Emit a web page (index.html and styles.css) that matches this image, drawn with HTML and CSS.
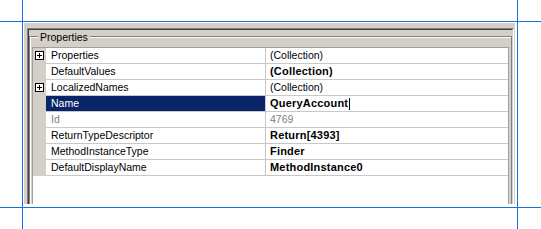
FILE: index.html
```html
<!DOCTYPE html>
<html>
<head>
    <link rel="stylesheet" href="styles.css">
</head>
<body>

<div class="panel">
    <div class="frame">
        <div class="frame-inner">
            <div class="group">
                <span class="group-title">Properties</span>
                <div class="grid">
                    <div class="row">
                        <div class="gutter">
                            <svg class="expand" width="9" height="9" viewBox="0 0 9 9"><rect x="0.5" y="0.5" width="8" height="8" fill="#fff" stroke="#000"/><path d="M2 4.5h5M4.5 2v5" stroke="#000"/></svg>
                        </div>
                        <div class="name">Properties</div>
                        <div class="value">(Collection)</div>
                    </div>
                    <div class="row">
                        <div class="gutter"></div>
                        <div class="name">DefaultValues</div>
                        <div class="value strong">(Collection)</div>
                    </div>
                    <div class="row">
                        <div class="gutter">
                            <svg class="expand" width="9" height="9" viewBox="0 0 9 9"><rect x="0.5" y="0.5" width="8" height="8" fill="#fff" stroke="#000"/><path d="M2 4.5h5M4.5 2v5" stroke="#000"/></svg>
                        </div>
                        <div class="name">LocalizedNames</div>
                        <div class="value">(Collection)</div>
                    </div>
                    <div class="row selected">
                        <div class="gutter"></div>
                        <div class="name">Name</div>
                        <div class="value strong">QueryAccount<span class="caret"></span></div>
                    </div>
                    <div class="row muted">
                        <div class="gutter"></div>
                        <div class="name">Id</div>
                        <div class="value">4769</div>
                    </div>
                    <div class="row">
                        <div class="gutter"></div>
                        <div class="name">ReturnTypeDescriptor</div>
                        <div class="value strong">Return[4393]</div>
                    </div>
                    <div class="row">
                        <div class="gutter"></div>
                        <div class="name">MethodInstanceType</div>
                        <div class="value strong">Finder</div>
                    </div>
                    <div class="row">
                        <div class="gutter"></div>
                        <div class="name">DefaultDisplayName</div>
                        <div class="value strong">MethodInstance0</div>
                    </div>
                </div>
            </div>
        </div>
    </div>
</div>

<!-- designer guide lines -->
<div class="guide guide-left"></div>
<div class="guide guide-right"></div>
<div class="guide guide-top"></div>
<div class="guide guide-bottom"></div>

</body>
</html>
```

FILE: styles.css
```css
body, html {
    margin: 0;
    background: #fff;
}
body {
    position: relative;
    height: 229px;
    overflow: hidden;
    font-family: "Liberation Sans", Arial, sans-serif;
    font-size: 10.5px;
    color: #000;
}

.guide {
    position: absolute;
    background: #1570e0;
}
.guide-left {
    left: 22px;
    top: 0;
    bottom: 0;
    width: 1px;
}
.guide-right {
    left: 517px;
    top: 0;
    bottom: 0;
    width: 1px;
}
.guide-top {
    top: 21px;
    left: 0;
    right: 0;
    height: 1px;
}
.guide-bottom {
    top: 207px;
    left: 0;
    right: 0;
    height: 1px;
}

.panel {
    margin: 23px 0 0 24px;
    width: 491px;
    height: 181px;
    box-sizing: border-box;
    padding: 5px 1px 0 3px;
    overflow: hidden;
    background: #d4d0c8;
}

.frame {
    border-top: 1px solid #808080;
    border-left: 1px solid #808080;
    border-right: 1px solid #fff;
}
.frame-inner {
    border-top: 1px solid #404040;
    border-left: 1px solid #404040;
    border-right: 1px solid #d4d0c8;
    padding-top: 6px;
}

.group {
    border: 1px solid #808080;
    box-shadow: inset 1px 1px 0 #fff;
    padding: 0 2px;
}
.group-title {
    display: block;
    width: max-content;
    margin: -6px 0 0 6px;
    padding: 0 2px;
    line-height: 13px;
    background: #d4d0c8;
}

.grid {
    margin-top: 3px;
    height: 170px;
    background: #fff;
    border: 1px solid #a0a0a0;
}

.row {
    display: flex;
    height: 16px;
}
.gutter {
    width: 13px;
    flex: none;
    box-sizing: border-box;
    padding: 3px 0 0 2px;
    background: #d4d0c8;
}
.expand {
    display: block;
}
.name {
    width: 220px;
    flex: none;
    box-sizing: border-box;
    padding-left: 5px;
    line-height: 15px;
    white-space: nowrap;
    border-right: 1px solid #c8c8c8;
    border-bottom: 1px solid #c8c8c8;
}
.value {
    flex: 1;
    padding-left: 4px;
    line-height: 15px;
    white-space: nowrap;
    border-bottom: 1px solid #c8c8c8;
}
.strong {
    font-weight: bold;
    font-size: 11px;
    letter-spacing: 0.2px;
}

.selected .name {
    background: #0a246a;
    color: #fff;
}
.muted {
    color: #808080;
}
.caret {
    display: inline-block;
    width: 1px;
    height: 12px;
    margin-left: 1px;
    vertical-align: middle;
    background: #000;
}
```
